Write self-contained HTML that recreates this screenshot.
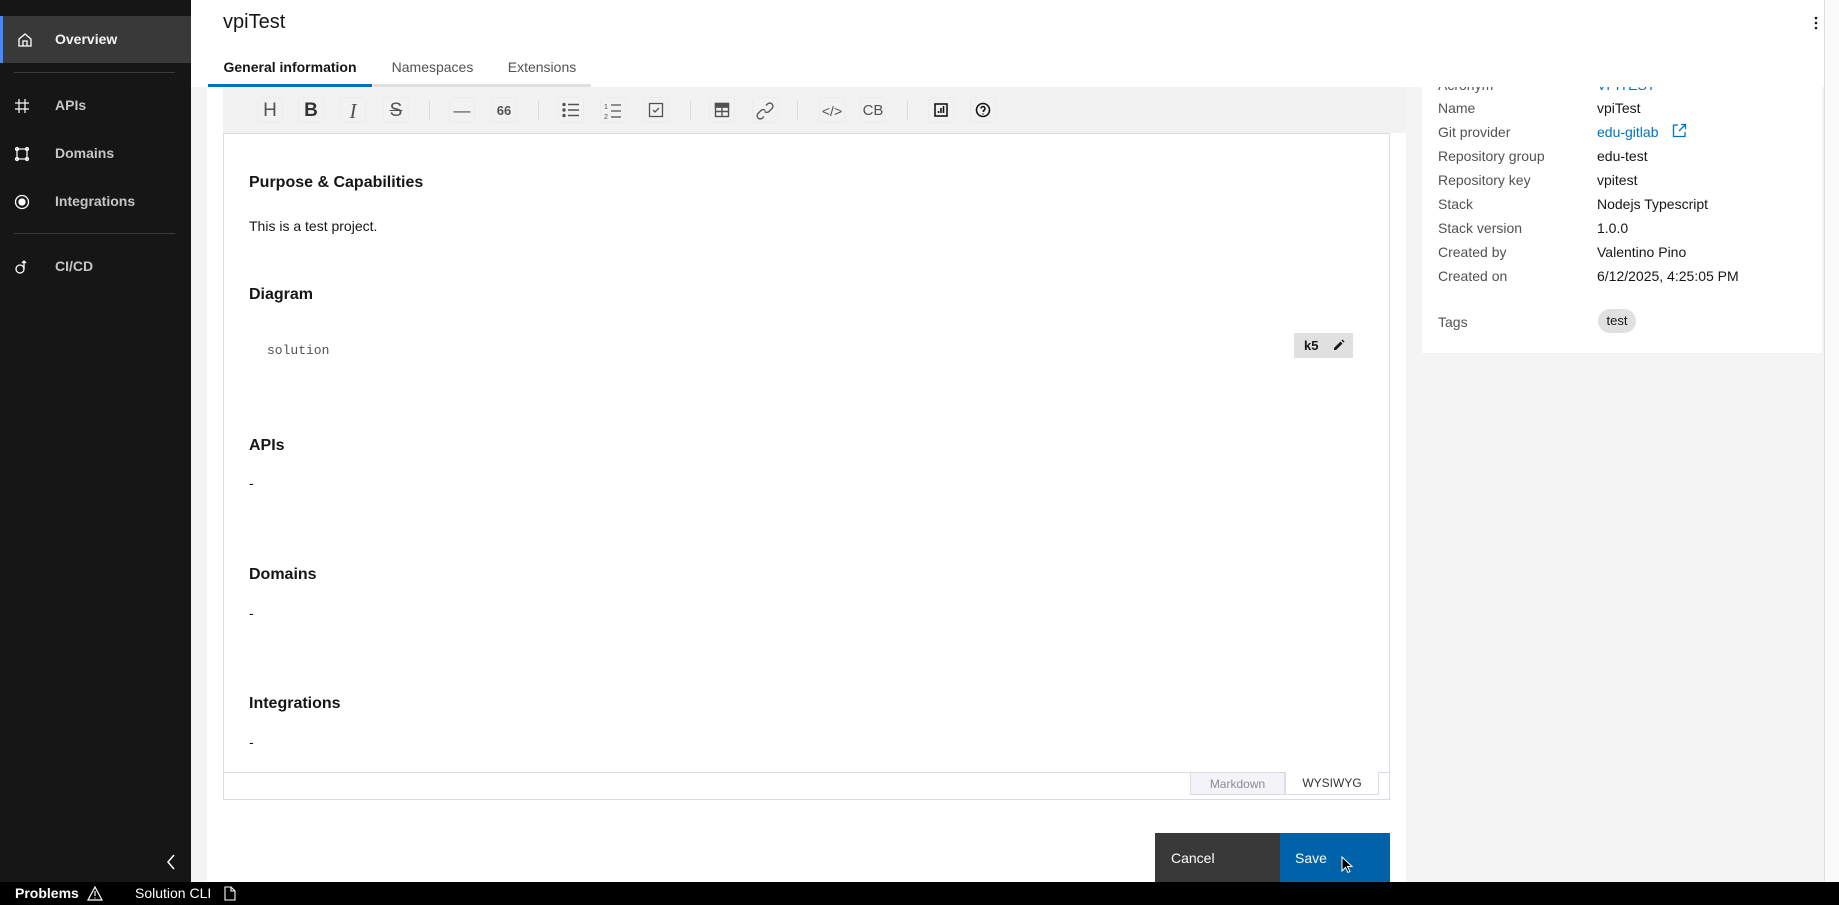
<!DOCTYPE html>
<html><head><meta charset="utf-8"><style>
*{box-sizing:border-box;margin:0;padding:0}
body{width:1839px;height:905px;overflow:hidden;font-family:"Liberation Sans",sans-serif;background:#fff;position:relative;color:#161616}
.a{position:absolute}
.side{left:0;top:0;width:191px;height:882px;background:#161616}
.nav{left:0;width:191px;height:47px;color:#c6c6c6;font-size:14px;font-weight:bold;line-height:47px}
.nav span{position:absolute;left:55px}
.nav svg{position:absolute;left:14px;top:16px}
.hr{left:14px;width:161px;height:1px;background:#393939}
.tb{top:97px;width:26px;height:26px;text-align:center;line-height:26px;font-size:17px;color:#525252;border:1px solid #ececec;border-radius:3px}
.tb svg{margin-top:4px}
.sep{top:100px;width:1px;height:20px;background:#ddd}
.lbl{left:1438px;font-size:14px;color:#525252}
.val{left:1597px;font-size:14px;color:#161616}
.h{left:249px;font-size:16px;font-weight:bold}
.p{left:249px;font-size:14px}
</style></head><body>
<div class="a side"></div>
<div class="a nav" style="top:16px;background:#393939;border-left:3px solid #4589ff;color:#f4f4f4"><svg width="16" height="16" viewBox="0 0 16 16" fill="none" stroke="#fff" stroke-width="1.3"><path d="M2 7L8 2l6 5v7H2zM6 14V9h4v5"/></svg><span style="left:52px">Overview</span></div>
<div class="a hr" style="top:72px"></div>
<div class="a nav" style="top:82px"><svg width="16" height="16" viewBox="0 0 16 16" stroke="#fff" stroke-width="1.2"><path d="M5 1v14M11 1v14M1 5h14M1 11h14"/></svg><span>APIs</span></div>
<div class="a nav" style="top:130px"><svg width="16" height="16" viewBox="0 0 16 16" fill="none" stroke="#fff" stroke-width="1.2"><rect x="3" y="3" width="10" height="10"/><circle cx="3" cy="3" r="1.5"/><circle cx="13" cy="3" r="1.5"/><circle cx="3" cy="13" r="1.5"/><circle cx="13" cy="13" r="1.5"/></svg><span>Domains</span></div>
<div class="a nav" style="top:178px"><svg width="16" height="16" viewBox="0 0 16 16" fill="none" stroke="#fff" stroke-width="1.3"><circle cx="8" cy="8" r="6.5"/><circle cx="8" cy="8" r="3" fill="#fff"/></svg><span>Integrations</span></div>
<div class="a hr" style="top:233px"></div>
<div class="a nav" style="top:243px"><svg width="16" height="16" viewBox="0 0 16 16" fill="none" stroke="#fff" stroke-width="1.3"><circle cx="6" cy="10" r="4"/><path d="M10 10V2M8 4l2-2 2 2"/></svg><span>CI/CD</span></div>
<svg class="a" style="left:165px;top:853px" width="12" height="18" viewBox="0 0 12 18" fill="none" stroke="#fff" stroke-width="1.5"><path d="M9 2L3 9l6 7"/></svg>
<div class="a" style="left:191px;top:87px;width:16px;height:795px;background:#f4f4f4"></div>
<div class="a" style="left:0;top:882px;width:1839px;height:23px;background:#000;color:#fff;font-size:14px;line-height:23px"><b style="position:absolute;left:15px">Problems</b>
<svg style="position:absolute;left:87px;top:4px" width="16" height="15" viewBox="0 0 16 15" fill="none" stroke="#fff" stroke-width="1.2"><path d="M8 1L1 14h14z M8 5v5M8 11.5v1"/></svg>
<span style="position:absolute;left:135px">Solution CLI</span>
<svg style="position:absolute;left:224px;top:4px" width="12" height="15" viewBox="0 0 12 15" fill="none" stroke="#fff" stroke-width="1.1"><path d="M1 1h6l4 4v9H1z M7 1v4h4"/></svg></div>
<!-- header -->
<div class="a" style="left:223px;top:11px;font-size:20px">vpiTest</div>
<svg class="a" style="left:1813px;top:15px" width="6" height="16" viewBox="0 0 6 16" fill="#161616"><circle cx="3" cy="3" r="1.3"/><circle cx="3" cy="8" r="1.3"/><circle cx="3" cy="13" r="1.3"/></svg>
<div class="a" style="left:208px;top:59px;width:164px;font-size:14px;font-weight:bold;text-align:center">General information</div>
<div class="a" style="left:372px;top:59px;width:121px;font-size:14px;color:#525252;text-align:center">Namespaces</div>
<div class="a" style="left:493px;top:59px;width:98px;font-size:14px;color:#525252;text-align:center">Extensions</div>
<div class="a" style="left:208px;top:84px;width:164px;height:3px;background:#0072c3"></div>
<div class="a" style="left:373px;top:84px;width:218px;height:3px;background:#e0e0e0"></div>
<div class="a" style="left:1406px;top:87px;width:418px;height:795px;background:#f4f4f4"></div>
<div class="a" style="left:1824px;top:0;width:15px;height:882px;background:#fafafa;border-left:1px solid #e0e0e0"></div>
<!-- info card -->
<div class="a" style="left:1422px;top:87px;width:400px;height:266px;background:#fff"></div>
<div class="a lbl" style="top:77px;clip-path:inset(10px 0 0 0)">Acronym</div><div class="a val" style="top:77px;color:#0072c3;clip-path:inset(10px 0 0 0)">VPITEST</div>
<div class="a lbl" style="top:100px">Name</div><div class="a val" style="top:100px">vpiTest</div>
<div class="a lbl" style="top:124px">Git provider</div><div class="a val" style="top:124px;color:#0072c3">edu-gitlab</div>
<svg class="a" style="left:1672px;top:123px" width="15" height="15" viewBox="0 0 15 15" fill="none" stroke="#0072c3" stroke-width="1.3"><path d="M6 2H1.5v11.5H13V9M9 1.5h4.5V6M13.5 1.5L7 8"/></svg>
<div class="a lbl" style="top:148px">Repository group</div><div class="a val" style="top:148px">edu-test</div>
<div class="a lbl" style="top:172px">Repository key</div><div class="a val" style="top:172px">vpitest</div>
<div class="a lbl" style="top:196px">Stack</div><div class="a val" style="top:196px">Nodejs Typescript</div>
<div class="a lbl" style="top:220px">Stack version</div><div class="a val" style="top:220px">1.0.0</div>
<div class="a lbl" style="top:244px">Created by</div><div class="a val" style="top:244px">Valentino Pino</div>
<div class="a lbl" style="top:268px">Created on</div><div class="a val" style="top:268px">6/12/2025, 4:25:05 PM</div>
<div class="a lbl" style="top:314px">Tags</div><div class="a" style="left:1598px;top:309px;width:38px;height:24px;border-radius:12px;background:#e0e0e0;font-size:13px;text-align:center;line-height:24px">test</div>
<!-- toolbar -->
<div class="a" style="left:223px;top:87px;width:1183px;height:46px;background:#f2f2f2"></div>
<div class="a tb" style="left:257px;font-size:19px">H</div>
<div class="a tb" style="left:298px;font-weight:bold;color:#333;font-size:19px">B</div>
<div class="a tb" style="left:340px;font-style:italic;font-family:'Liberation Serif',serif;font-size:21px">I</div>
<div class="a tb" style="left:383px;text-decoration:line-through;font-size:19px">S</div>
<div class="a sep" style="left:429px"></div>
<div class="a tb" style="left:449px">&#8212;</div>
<div class="a tb" style="left:491px;font-size:13px;font-weight:bold">66</div>
<div class="a sep" style="left:538px"></div>
<div class="a tb" style="left:558px"><svg width="18" height="16" viewBox="0 0 18 16" fill="none" stroke="#525252" stroke-width="1.4"><path d="M6 2.5h11M6 8h11M6 13.5h11"/><circle cx="2" cy="2.5" r="1" fill="#525252"/><circle cx="2" cy="8" r="1" fill="#525252"/><circle cx="2" cy="13.5" r="1" fill="#525252"/></svg></div>
<div class="a tb" style="left:600px"><svg width="18" height="18" viewBox="0 0 18 18" fill="none" stroke="#525252" stroke-width="1.3"><path d="M7 3h10M7 9h10M7 15h10"/><text x="0" y="7" font-size="7" fill="#525252" stroke="none" font-family="Liberation Sans">1</text><text x="0" y="17" font-size="7" fill="#525252" stroke="none" font-family="Liberation Sans">2</text></svg></div>
<div class="a tb" style="left:643px"><svg width="16" height="16" viewBox="0 0 16 16" fill="none" stroke="#525252" stroke-width="1.3"><rect x="1.5" y="1.5" width="13" height="13"/><path d="M5 8l2 2 4-4"/></svg></div>
<div class="a sep" style="left:690px"></div>
<div class="a tb" style="left:709px"><svg width="16" height="16" viewBox="0 0 16 16" fill="none" stroke="#525252" stroke-width="1.4"><rect x="1.5" y="1.5" width="13" height="13"/><path d="M1.5 5h13M8 5v9.5M1.5 9.5h13"/><rect x="1.5" y="1.5" width="13" height="3.5" fill="#525252"/></svg></div>
<div class="a tb" style="left:752px"><svg width="18" height="18" viewBox="0 0 18 18" fill="none" stroke="#525252" stroke-width="1.3"><path d="M10 3.5l1.5-1.5a3 3 0 0 1 4.5 4.5L13 9.5a3 3 0 0 1-4.3 0M8 14.5L6.5 16a3 3 0 0 1-4.5-4.5L5 8.5a3 3 0 0 1 4.3 0"/></svg></div>
<div class="a sep" style="left:797px"></div>
<div class="a tb" style="left:819px;font-size:14px">&lt;/&gt;</div>
<div class="a tb" style="left:860px;font-size:15px">CB</div>
<div class="a sep" style="left:907px"></div>
<div class="a tb" style="left:928px"><svg width="16" height="16" viewBox="0 0 16 16" fill="none" stroke="#161616" stroke-width="1.6"><rect x="2" y="2" width="12" height="12"/><path d="M5.5 11V9M8 11V6M10.5 11V4"/></svg></div>
<div class="a tb" style="left:970px"><svg width="16" height="16" viewBox="0 0 16 16" fill="none" stroke="#161616" stroke-width="1.6"><circle cx="8" cy="8" r="6.5"/><path d="M6 6.5a2 2 0 1 1 2.5 2V10M8 11.5v1"/></svg></div>
<!-- editor -->
<div class="a" style="left:223px;top:133px;width:1167px;height:667px;border:1px solid #dcdce6;background:#fff"></div>
<div class="a h" style="top:174px">Purpose &amp; Capabilities</div>
<div class="a p" style="top:218px">This is a test project.</div>
<div class="a h" style="top:286px">Diagram</div>
<div class="a" style="left:267px;top:343px;font-family:'Liberation Mono',monospace;font-size:13px;color:#525252">solution</div>
<div class="a" style="left:1294px;top:333px;width:59px;height:25px;background:#e0e0e0;font-size:13px;font-weight:bold;line-height:25px;padding-left:10px">k5</div>
<svg class="a" style="left:1333px;top:339px" width="12" height="12" viewBox="0 0 12 12" fill="#161616"><path d="M1 9l6.5-6.5 2 2L3 11H1zM8.5 1.5l1-1 2 2-1 1z"/></svg>
<div class="a h" style="top:437px">APIs</div><div class="a p" style="top:475px">-</div>
<div class="a h" style="top:566px">Domains</div><div class="a p" style="top:605px">-</div>
<div class="a h" style="top:695px">Integrations</div><div class="a p" style="top:734px">-</div>
<div class="a" style="left:224px;top:772px;width:1165px;height:1px;background:#dcdce6"></div>
<div class="a" style="left:1190px;top:772px;width:95px;height:23px;background:#f4f4f8;border:1px solid #dcdce6;font-size:12px;color:#8a8a99;text-align:center;line-height:22px">Markdown</div>
<div class="a" style="left:1285px;top:772px;width:94px;height:23px;background:#fff;border:1px solid #dcdce6;border-top:none;font-size:12px;color:#333;text-align:center;line-height:22px">WYSIWYG</div>
<div class="a" style="left:1155px;top:833px;width:125px;height:49px;background:#393939;color:#fff;font-size:14px;padding:17px 0 0 16px">Cancel</div>
<div class="a" style="left:1280px;top:833px;width:110px;height:49px;background:#0062a8;color:#fff;font-size:14px;padding:17px 0 0 15px">Save</div>
<svg class="a" style="left:1341px;top:856px" width="12" height="18" viewBox="0 0 12 18"><path d="M1 1v14l3.5-3.5 2.5 5 2-1-2.5-5H11z" fill="#000" stroke="#fff"/></svg>
</body></html>
